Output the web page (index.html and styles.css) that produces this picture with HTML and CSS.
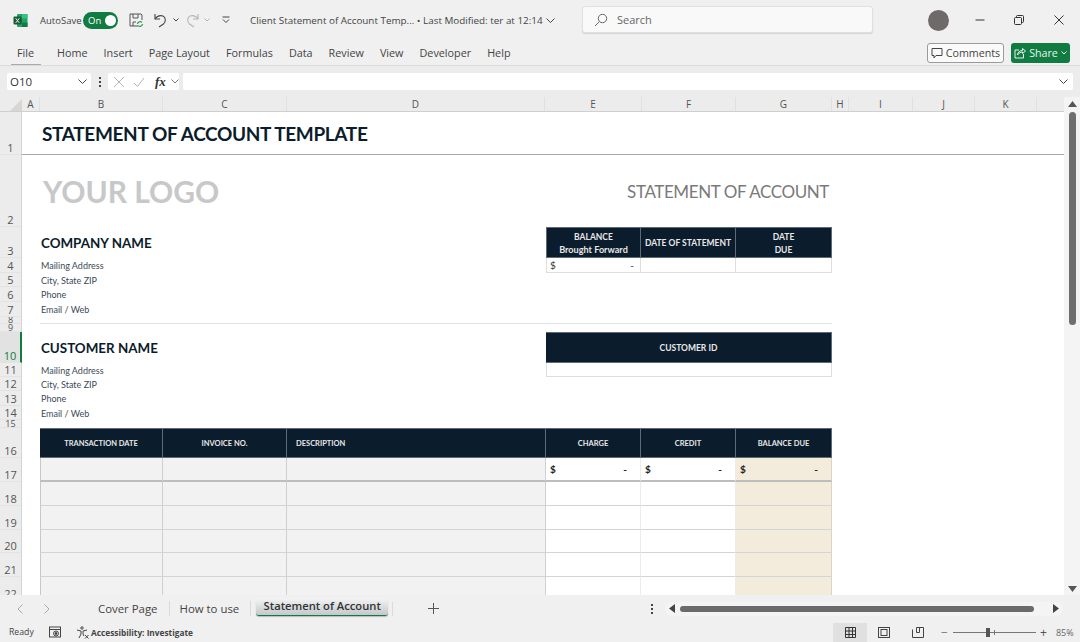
FILE: index.html
```html
<!DOCTYPE html>
<html lang="en">
<head>
<meta charset="utf-8">
<title>Client Statement of Account Template</title>
<link rel="stylesheet" href="styles.css">
</head>
<body>
<div class="app">
  <header class="titlebar">
    <svg class="xl-logo" width="15" height="15" viewBox="0 0 15 15"><rect x="4" y="1" width="10.5" height="13" rx="1" fill="#21a366"/><rect x="9" y="1" width="5.5" height="4.4" fill="#33c481"/><rect x="9" y="9.6" width="5.5" height="4.4" fill="#107c41"/><rect x="4" y="5.4" width="5" height="4.3" fill="#107c41"/><rect x="0.5" y="3.5" width="8" height="8" rx="1" fill="#185c37"/><path d="M2.7 5.3l1.8 2.3-1.8 2.3M6.3 5.3L4.5 7.6l1.8 2.3" stroke="#fff" stroke-width=".9" fill="none"/></svg>
    <span class="autosave">AutoSave</span>
    <span class="toggle"><span class="toggle-label">On</span><span class="knob"></span></span>
    <svg class="save" width="16" height="16" viewBox="0 0 16 16" fill="none" stroke="#555" stroke-width="1"><path d="M10 14H2V2h11l1 1v5"/><path d="M5 2v4h5V2M5 14v-4h3"/><path d="M9.5 12a2.6 2.6 0 0 1 4.5-1.6M14.5 12a2.6 2.6 0 0 1-4.5 1.6" stroke="#2b9a5a" stroke-width="1.2"/></svg>
    <svg class="undo" width="15" height="16" viewBox="0 0 15 16" fill="none" stroke="#444" stroke-width="1.1"><path d="M2 2v5h5"/><path d="M2 7c2-3 5-4 8-3 3 1.500 3 6 .5 8L6 15"/></svg>
    <svg class="mini" width="6" height="4" viewBox="0 0 6 4" fill="none" stroke="#444"><path d="M.5.5l2.500 2.500L5.500.5"/></svg>
    <svg class="redo" width="15" height="16" viewBox="0 0 15 16" fill="none" stroke="#b5b5b5" stroke-width="1.1"><path d="M13 2v5H8"/><path d="M13 7c-2-3-5-4-8-3-3 1.500-3 6-.5 8L9 15"/></svg>
    <svg class="mini mini-off" width="6" height="4" viewBox="0 0 6 4" fill="none" stroke="#b5b5b5"><path d="M.5.5l2.500 2.500L5.500.5"/></svg>
    <svg class="customize" width="8" height="8" viewBox="0 0 8 8" fill="none" stroke="#444"><path d="M.5 1h7M1 3.500l3 3 3-3"/></svg>
    <span class="doc-title">Client Statement of Account Temp... &bull; Last Modified: ter at 12:14</span>
    <svg class="doc-chev" width="9" height="5" viewBox="0 0 9 5" fill="none" stroke="#444"><path d="M.5.5l4 4 4-4"/></svg>
    <div class="search">
      <svg width="14" height="14" viewBox="0 0 14 14" fill="none" stroke="#666"><circle cx="8.500" cy="5.500" r="4.200"/><path d="M5.500 8.500L1 13"/></svg>
      <span>Search</span>
    </div>
    <span class="avatar"></span>
    <svg class="win win-min" width="10" height="10" viewBox="0 0 10 10" stroke="#333"><path d="M.5 5h9"/></svg>
    <svg class="win win-max" width="10" height="10" viewBox="0 0 10 10" fill="none" stroke="#333"><rect x=".5" y="2.500" width="7" height="7" rx="1"/><path d="M2.500 2.500V1.500a1 1 0 0 1 1-1h5a1 1 0 0 1 1 1v5a1 1 0 0 1-1 1h-1"/></svg>
    <svg class="win win-close" width="10" height="10" viewBox="0 0 10 10" stroke="#333"><path d="M.5.500l9 9M9.500.500l-9 9"/></svg>
  </header>

  <nav class="ribbon">
    <span class="tab tab-file">File</span>
    <span class="tab">Home</span>
    <span class="tab">Insert</span>
    <span class="tab">Page Layout</span>
    <span class="tab">Formulas</span>
    <span class="tab">Data</span>
    <span class="tab">Review</span>
    <span class="tab">View</span>
    <span class="tab">Developer</span>
    <span class="tab">Help</span>
    <button class="btn-comments">
      <svg width="12" height="12" viewBox="0 0 12 12" fill="none" stroke="#444"><path d="M1 1.500h10v7H5L3 11V8.500H1z"/></svg>
      Comments
    </button>
    <button class="btn-share">
      <svg width="12" height="12" viewBox="0 0 12 12" fill="none" stroke="#fff" stroke-width=".9"><path d="M5 3H1v8h8.500V7"/><path d="M3.500 8c0-3 2.500-4.500 5-4.500V1.500L11.500 4 8.500 6.500V5C6.500 5 5 6 3.500 8z"/></svg>
      Share
      <svg width="6" height="4" viewBox="0 0 6 4" fill="none" stroke="#fff"><path d="M.5.500L3 3 5.500.500"/></svg>
    </button>
  </nav>

  <div class="formula-bar">
    <div class="namebox"><span>O10</span><svg width="9" height="5" viewBox="0 0 9 5" fill="none" stroke="#444"><path d="M.5.500l4 4 4-4"/></svg></div>
    <span class="dots"><i></i><i></i><i></i></span>
    <div class="fx-box">
      <svg width="12" height="12" viewBox="0 0 12 12" fill="none" stroke="#b4b4b4"><path d="M1 1l10 10M11 1L1 11"/></svg>
      <svg width="12" height="12" viewBox="0 0 12 12" fill="none" stroke="#b4b4b4"><path d="M1 7l3.500 3.500L11 2"/></svg>
      <span class="fx">fx</span>
      <svg width="8" height="5" viewBox="0 0 8 5" fill="none" stroke="#777"><path d="M.5.500L4 4 7.500.500"/></svg>
    </div>
    <div class="formula-input"><svg width="9" height="5" viewBox="0 0 9 5" fill="none" stroke="#444"><path d="M.5.500l4 4 4-4"/></svg></div>
  </div>

  <div class="col-headers">
    <span class="corner"><svg width="12" height="12" viewBox="0 0 12 12"><path d="M12 0v12H0z" fill="#d6d6d6"/></svg></span>
    <span class="ch ch-a">A</span><span class="ch ch-b">B</span><span class="ch ch-c">C</span><span class="ch ch-d">D</span><span class="ch ch-e">E</span><span class="ch ch-f">F</span><span class="ch ch-g">G</span><span class="ch ch-h">H</span><span class="ch ch-i">I</span><span class="ch ch-j">J</span><span class="ch ch-k">K</span><span class="ch-rest"></span>
    <span class="v-up"><svg width="9" height="6" viewBox="0 0 9 6"><path d="M4.500 0L9 6H0z" fill="#555"/></svg></span>
  </div>

  <div class="work">
    <div class="row-headers">
      <span>1</span><span>2</span><span>3</span><span>4</span><span>5</span><span>6</span><span>7</span><span class="tiny">8</span><span class="tiny">9</span><span class="current">10</span><span>11</span><span>12</span><span>13</span><span>14</span><span class="tiny">15</span><span>16</span><span>17</span><span>18</span><span>19</span><span>20</span><span>21</span><span>22</span>
    </div>
    <main class="sheet">
      <h1 class="sheet-title">STATEMENT OF ACCOUNT TEMPLATE</h1>
      <div class="logo">YOUR LOGO</div>
      <div class="statement">STATEMENT OF ACCOUNT</div>

      <h2 class="name name-company">COMPANY NAME</h2>
      <div class="info r4">Mailing Address</div>
      <div class="info r5">City, State ZIP</div>
      <div class="info r6">Phone</div>
      <div class="info r7">Email / Web</div>
      <div class="divider"></div>

      <div class="hd hd-top col-e">BALANCE<br><span class="hd-sub">Brought Forward</span></div>
      <div class="hd hd-top col-f">DATE OF STATEMENT</div>
      <div class="hd hd-top col-g">DATE<br>DUE</div>
      <div class="val-top col-e"><span>$</span><span>-</span></div>
      <div class="val-top col-f"></div>
      <div class="val-top col-g"></div>

      <h2 class="name name-customer">CUSTOMER NAME</h2>
      <div class="info r11">Mailing Address</div>
      <div class="info r12">City, State ZIP</div>
      <div class="info r13">Phone</div>
      <div class="info r14">Email / Web</div>
      <div class="hd hd-id">CUSTOMER ID</div>
      <div class="val-id"></div>

      <div class="hd hd-tx col-b">TRANSACTION DATE</div>
      <div class="hd hd-tx col-c">INVOICE NO.</div>
      <div class="hd hd-tx col-d hd-left">DESCRIPTION</div>
      <div class="hd hd-tx col-e">CHARGE</div>
      <div class="hd hd-tx col-f">CREDIT</div>
      <div class="hd hd-tx col-g">BALANCE DUE</div>

      <div class="cell grey col-b r17 first"></div><div class="cell grey col-c r17 first"></div><div class="cell grey col-d r17 first"></div>
      <div class="cell white col-e r17 first money"><span>$</span><span>-</span></div><div class="cell white col-f r17 first money"><span>$</span><span>-</span></div><div class="cell tan col-g r17 first money"><span>$</span><span>-</span></div>

      <div class="cell grey col-b r18"></div><div class="cell grey col-c r18"></div><div class="cell grey col-d r18"></div><div class="cell white col-e r18"></div><div class="cell white col-f r18"></div><div class="cell tan col-g r18"></div>
      <div class="cell grey col-b r19"></div><div class="cell grey col-c r19"></div><div class="cell grey col-d r19"></div><div class="cell white col-e r19"></div><div class="cell white col-f r19"></div><div class="cell tan col-g r19"></div>
      <div class="cell grey col-b r20"></div><div class="cell grey col-c r20"></div><div class="cell grey col-d r20"></div><div class="cell white col-e r20"></div><div class="cell white col-f r20"></div><div class="cell tan col-g r20"></div>
      <div class="cell grey col-b r21"></div><div class="cell grey col-c r21"></div><div class="cell grey col-d r21"></div><div class="cell white col-e r21"></div><div class="cell white col-f r21"></div><div class="cell tan col-g r21"></div>
      <div class="cell grey col-b r22"></div><div class="cell grey col-c r22"></div><div class="cell grey col-d r22"></div><div class="cell white col-e r22"></div><div class="cell white col-f r22"></div><div class="cell tan col-g r22"></div>
    </main>
    <aside class="vscroll">
      <span class="vthumb"></span>
      <svg class="v-down" width="9" height="6" viewBox="0 0 9 6"><path d="M4.500 6L9 0H0z" fill="#555"/></svg>
    </aside>
  </div>

  <div class="tabsbar">
    <svg class="nav-l" width="6" height="10" viewBox="0 0 6 10" fill="none" stroke="#aaa"><path d="M5.500.500L1 5l4.500 4.500"/></svg>
    <svg class="nav-r" width="6" height="10" viewBox="0 0 6 10" fill="none" stroke="#aaa"><path d="M.5.500L5 5 .5 9.500"/></svg>
    <span class="sheet-tab t-cover">Cover Page</span>
    <span class="sheet-tab t-how">How to use</span>
    <span class="sheet-tab active">Statement of Account</span>
    <span class="tab-sep"></span>
    <svg class="add" width="11" height="11" viewBox="0 0 11 11" stroke="#555"><path d="M5.500 0v11M0 5.500h11"/></svg>
    <span class="dots dots-h"><i></i><i></i><i></i></span>
    <div class="hscroll">
      <svg width="6" height="9" viewBox="0 0 6 9"><path d="M0 4.500L6 0v9z" fill="#444"/></svg>
      <span class="hthumb"></span>
      <svg width="6" height="9" viewBox="0 0 6 9"><path d="M6 4.500L0 0v9z" fill="#444"/></svg>
    </div>
  </div>

  <footer class="status">
    <span class="ready">Ready</span>
    <svg class="macro" width="12" height="12" viewBox="0 0 12 12" fill="none" stroke="#444"><rect x=".5" y="1" width="11" height="10"/><path d="M.5 3.500h11"/><circle cx="7" cy="7.500" r="2.500"/><circle cx="7" cy="7.500" r="1" fill="#444"/></svg>
    <svg class="access" width="13" height="13" viewBox="0 0 13 13" fill="none" stroke="#444"><circle cx="6" cy="2" r="1.200"/><path d="M1 4l4 1v3l-2 4M11 4L7 5v3l1 2M9 9l3.500 3.500M12.500 9L9 12.500"/></svg>
    <span class="access-label">Accessibility: Investigate</span>
    <span class="view view-on"><svg width="11" height="11" viewBox="0 0 11 11" fill="none" stroke="#333"><path d="M.5.500h10v10H.5zM.5 4h10M.5 7.500h10M4 .5v10M7.500.5v10"/></svg></span>
    <span class="view"><svg width="12" height="11" viewBox="0 0 12 11" fill="none" stroke="#444"><rect x=".5" y=".5" width="11" height="10"/><rect x="3" y="2.500" width="6" height="6"/></svg></span>
    <span class="view"><svg width="12" height="11" viewBox="0 0 12 11" fill="none" stroke="#444"><path d="M.5 2.500v8h11v-10h-7v5h3v-5"/></svg></span>
    <span class="zoom-minus">&minus;</span>
    <span class="slider"><span class="tick"></span><span class="slider-thumb"></span></span>
    <span class="zoom-plus">+</span>
    <span class="zoom-val">85%</span>
  </footer>
</div>
</body>
</html>
```
FILE: styles.css
```css
* { box-sizing: border-box; }
html, body { margin: 0; padding: 0; width: 1080px; height: 642px; overflow: hidden; }
body { font-family: "Open Sans", "Noto Sans", sans-serif; background: #f0f0f0; color: #333; }
.app { width: 1080px; height: 642px; display: flex; flex-direction: column; overflow: hidden; }
svg { display: block; flex: none; }

/* Title bar */
.titlebar { height: 40px; display: flex; align-items: center; padding: 0 0 0 13px; font-size: 10px; color: #444; flex: none; }
.autosave { margin-left: 12px; font-size: 9.5px; width: 42px; }
.toggle { margin-left: 1px; width: 35px; height: 17px; background: #107c41; border-radius: 9px; color: #fff; font-size: 9.5px; display: flex; align-items: center; justify-content: space-between; padding: 0 2px 0 5px; }
.knob { width: 11px; height: 11px; border-radius: 50%; background: #fff; }
.save { margin-left: 10px; }
.undo { margin-left: 9px; }
.mini { margin-left: 5px; }
.redo { margin-left: 6px; }
.mini-off { margin-left: 4px; }
.customize { margin-left: 12px; }
.doc-title { margin-left: 20px; width: 295px; font-size: 9.85px; white-space: nowrap; }
.doc-chev { margin-left: 1px; }
.search { margin-left: 27px; margin-bottom: 1px; width: 291px; height: 27px; background: #f9f9f9; border: 1px solid #e0e0e0; border-radius: 3px; box-shadow: 0 1px 1px #d4d4d4; display: flex; align-items: center; padding-left: 11px; gap: 9px; font-size: 11px; color: #666; }
.avatar { margin-left: 55px; width: 21px; height: 21px; border-radius: 50%; background: #6f6a6a; }
.win-min { margin-left: 26px; }
.win-max { margin-left: 29px; }
.win-close { margin-left: 30px; }

/* Ribbon tabs */
.ribbon { height: 26px; display: flex; align-items: center; padding-left: 9px; flex: none; font-size: 10.8px; color: #444; border-bottom: 1px solid #dcdcdc; position: relative; }
.tab { padding: 0 8px; white-space: nowrap; }
.tab-file { padding: 0 8px; margin-right: 7px; position: relative; }
.tab-file::after { content: ""; position: absolute; left: 2px; right: 1px; bottom: -5px; height: 1px; background: #aaa; }
.btn-comments { margin-left: auto; height: 20px; width: 77px; border: 1px solid #9a9a9a; border-radius: 3px; background: #fafafa; color: #444; font: 10.7px "Open Sans", sans-serif; display: flex; align-items: center; justify-content: center; gap: 3px; padding: 0; }
.btn-share { margin-left: 7px; margin-right: 10px; height: 20px; width: 59px; border: 0; border-radius: 3px; background: #107c41; color: #e9f3ec; font: 10.7px "Open Sans", sans-serif; display: flex; align-items: center; justify-content: center; gap: 3px; padding: 0; }

/* Formula bar */
.formula-bar { height: 31px; flex: none; display: flex; align-items: center; padding: 0 6px 0 7px; background: #ececec; }
.namebox { width: 84px; height: 17px; background: #fff; border-radius: 2px; display: flex; align-items: center; justify-content: space-between; padding: 0 4px 0 3px; font-size: 11.5px; color: #333; }
.dots { display: flex; flex-direction: column; gap: 2px; align-items: center; }
.dots i { width: 2px; height: 2px; background: #444; display: block; }
.formula-bar .dots { margin-left: 8px; }
.fx-box { margin-left: 7px; width: 71px; height: 17px; background: #fff; border-radius: 2px; display: flex; align-items: center; padding: 0 1px 0 5px; gap: 8px; }
.fx { font: italic 700 13px "Liberation Serif", serif; color: #333; width: 12px; margin-left: 2px; margin-right: -3px; }
.formula-input { margin-left: 4px; width: 890px; height: 17px; background: #fff; border-radius: 2px; display: flex; align-items: center; justify-content: flex-end; padding-right: 5px; }

/* Column headers */
.col-headers { height: 15px; flex: none; display: flex; background: #ececec; border-bottom: 1px solid #cfcfcf; font-size: 10px; color: #555; line-height: 14px; }
.corner { width: 22px; display: flex; justify-content: flex-end; align-items: flex-end; }
.ch { text-align: center; border-right: 1px solid #e0e0e0; }
.ch-a { width: 18px; } .ch-b { width: 123px; } .ch-c { width: 124px; } .ch-d { width: 258px; } .ch-e { width: 97px; } .ch-f { width: 94px; } .ch-g { width: 96px; } .ch-h { width: 17px; } .ch-i { width: 64px; } .ch-j { width: 62px; } .ch-k { width: 62px; }
.ch-rest { flex: 1; }
.v-up { width: 16px; background: #f4f4f4; display: flex; justify-content: center; padding-top: 4px; margin-bottom: -1px; }

/* Work area */
.work { height: 483px; flex: none; display: flex; overflow: hidden; background: #fff; }
.row-headers { width: 22px; flex: none; background: #ececec; border-right: 1px solid #d4d4d4; display: grid; grid-template-rows: 43px 72px 31px 15px 14px 15px 15px 7px 8px 31px 14px 14px 15px 14px 8px 30px 24px 24px 24px 23px 24px 24px; font-size: 11px; color: #555; text-align: center; line-height: 12px; }
.row-headers span { display: flex; align-items: flex-end; justify-content: center; overflow: hidden; border-bottom: 1px solid #e3e3e3; height: 100%; }
.row-headers .tiny { font-size: 9px; line-height: 6px; }
.row-headers .current { background: #e2e2e2; color: #107c41; border-right: 2px solid #107c41; margin-right: -1px; }

.sheet { width: 1042px; flex: none; position: relative; display: grid; align-content: start; grid-template-columns: 18px 123px 124px 259px 95px 95px 96px 232px; grid-template-rows: 43px 72px 31px 15px 14px 15px 15px 7px 8px 31px 14px 14px 15px 14px 8px 30px 24px 24px 24px 23px 24px 24px; background: #fff; color: #0b1c2c; overflow: hidden; }
.sheet-title { grid-column: 2 / 9; grid-row: 1; margin: 0; padding: 0 0 10px 2px; align-self: end; font: 700 19px/23px Lato, sans-serif; letter-spacing: -0.35px; color: #0b1c2c; white-space: nowrap; }
.sheet::before { content: ""; grid-column: 1 / -1; grid-row: 1; align-self: end; height: 1px; background: #a9a9a9; }
.logo { grid-column: 2 / 5; grid-row: 2; padding: 18px 0 0 3px; font: 700 30px/36px Lato, sans-serif; color: #c8c8c8; white-space: nowrap; }
.statement { grid-column: 5 / 8; grid-row: 2; justify-self: end; padding: 27px 3px 0 0; font: 400 17px/20px Lato, sans-serif; letter-spacing: -0.4px; color: #7a7a7a; white-space: nowrap; }
.name { margin: 0; font: 700 13.4px/1.2 Lato, sans-serif; padding: 1px 0 0 1px; color: #0b1c2c; grid-column: 2 / 5; white-space: nowrap; }
.name-company { grid-row: 3; align-self: center; }
.name-customer { grid-row: 10; align-self: center; }
.info { grid-column: 2 / 5; font: 400 9px/14px Lato, sans-serif; color: #3d4a57; padding: 1px 0 0 1px; white-space: nowrap; }
.r4 { grid-row: 4; } .r5 { grid-row: 5; } .r6 { grid-row: 6; } .r7 { grid-row: 7; }
.r11 { grid-row: 11; } .r12 { grid-row: 12; } .r13 { grid-row: 13; } .r14 { grid-row: 14; }
.r17 { grid-row: 17; } .r18 { grid-row: 18; } .r19 { grid-row: 19; } .r20 { grid-row: 20; } .r21 { grid-row: 21; } .r22 { grid-row: 22; }
.col-b { grid-column: 2; } .col-c { grid-column: 3; } .col-d { grid-column: 4; } .col-e { grid-column: 5; } .col-f { grid-column: 6; } .col-g { grid-column: 7; }
.divider { grid-column: 2 / 8; grid-row: 8; align-self: end; height: 1px; background: #e2e2e2; }

.hd { background: #0b1c2c; color: #e8e8e8; font: 700 8.5px/12.5px Lato, sans-serif; display: flex; align-items: center; justify-content: center; text-align: center; padding-top: 2px; border-right: 1px solid #5f6a75; border-top: 1px solid #5f6a75; border-bottom: 1px solid #5f6a75; }
.hd-top { grid-row: 3; display: block; align-content: center; white-space: nowrap; }
.hd-sub { font-size: 9.1px; }
.hd-top.col-e { border-left: 1px solid #5f6a75; }
.hd-id { grid-column: 5 / 8; grid-row: 10; }
.hd-tx { grid-row: 16; font-size: 7.5px; }
.hd-left { justify-content: flex-start; padding-left: 9px; }
.val-top { grid-row: 4; border-right: 1px solid #dedede; border-bottom: 1px solid #dedede; font: 400 10px/15px Lato, sans-serif; color: #333; display: flex; justify-content: space-between; padding: 0 6px 0 3px; }
.val-top.col-e { border-left: 1px solid #dedede; }
.val-id { grid-column: 5 / 8; grid-row: 11; border: 1px solid #dedede; border-top: 0; }
.cell { border-bottom: 1px solid #d4d4d4; border-right: 1px solid #d0d0d0; }
.cell.first { border-bottom: 2px solid #bdbdbd; }
.cell.col-b { border-left: 1px solid #c8c8c8; }
.grey { background: #f2f2f2; }
.white { background: #fff; border-right-color: #ececec; }
.tan { background: #f3ebdb; border-right-color: #dcd5c6; }
.money { display: flex; align-items: center; justify-content: space-between; padding: 0 13px 0 4px; font: 700 10px Lato, sans-serif; color: #222; }

.vscroll { flex: 1; background: #f4f4f4; display: flex; flex-direction: column; align-items: center; position: relative; }
.vthumb { width: 7px; height: 213px; background: #6e6e6e; border-radius: 4px; }
.v-down { position: absolute; bottom: 3px; }

/* Sheet tabs */
.tabsbar { height: 27px; flex: none; display: flex; align-items: center; background: #f0f0f0; font-size: 11.4px; color: #444; }
.nav-l { margin-left: 17px; }
.nav-r { margin-left: 21px; }
.sheet-tab { white-space: nowrap; }
.t-cover { margin-left: 48px; padding-right: 11px; border-right: 1px solid #dadada; }
.t-how { padding: 0 11px 0 10px; border-right: 1px solid #dadada; }
.active { margin-left: 5px; width: 132px; height: 18px; margin-top: -3px; text-align: center; line-height: 15px; font-weight: 600; color: #333; background: linear-gradient(#f4f4f4, #c4c8cc); border-radius: 3px; border-bottom: 1px solid #107c41; box-shadow: 0 1px 1px #bbb; font-size: 11.2px; }
.tab-sep { margin-left: 4px; width: 1px; height: 14px; background: #dadada; }
.add { margin-left: 35px; }
.dots-h { margin-left: 212px; }
.hscroll { margin-left: 12px; width: 398px; height: 14px; border-radius: 7px; display: flex; align-items: center; padding: 0 4px; background: #f4f4f4; }
.hthumb { width: 354px; height: 6px; margin-left: 5px; margin-right: auto; border-radius: 3px; background: #6a6a6a; }

/* Status bar */
.status { flex: 1; display: flex; align-items: center; font-size: 8.7px; color: #444; background: #f0f0f0; }
.ready { margin-left: 9px; width: 40px; }
.access { margin-left: 15px; }
.access-label { margin-left: 2px; width: 742px; font-weight: 700; font-size: 8.3px; white-space: nowrap; }
.view { width: 34px; height: 19px; display: flex; align-items: center; justify-content: center; }
.view-on { background: #e0e0e0; }
.zoom-minus { margin-left: 6px; width: 12px; font-size: 12px; color: #777; }
.slider { width: 83px; height: 1px; background: #777; position: relative; }
.tick { position: absolute; left: 41px; top: -2px; width: 1px; height: 5px; background: #777; }
.slider-thumb { position: absolute; left: 33px; top: -4px; width: 4px; height: 9px; background: #555; }
.zoom-plus { margin-left: 4px; font-size: 12px; color: #555; }
.zoom-val { margin-left: 9px; color: #666; font-size: 9px; }
```
